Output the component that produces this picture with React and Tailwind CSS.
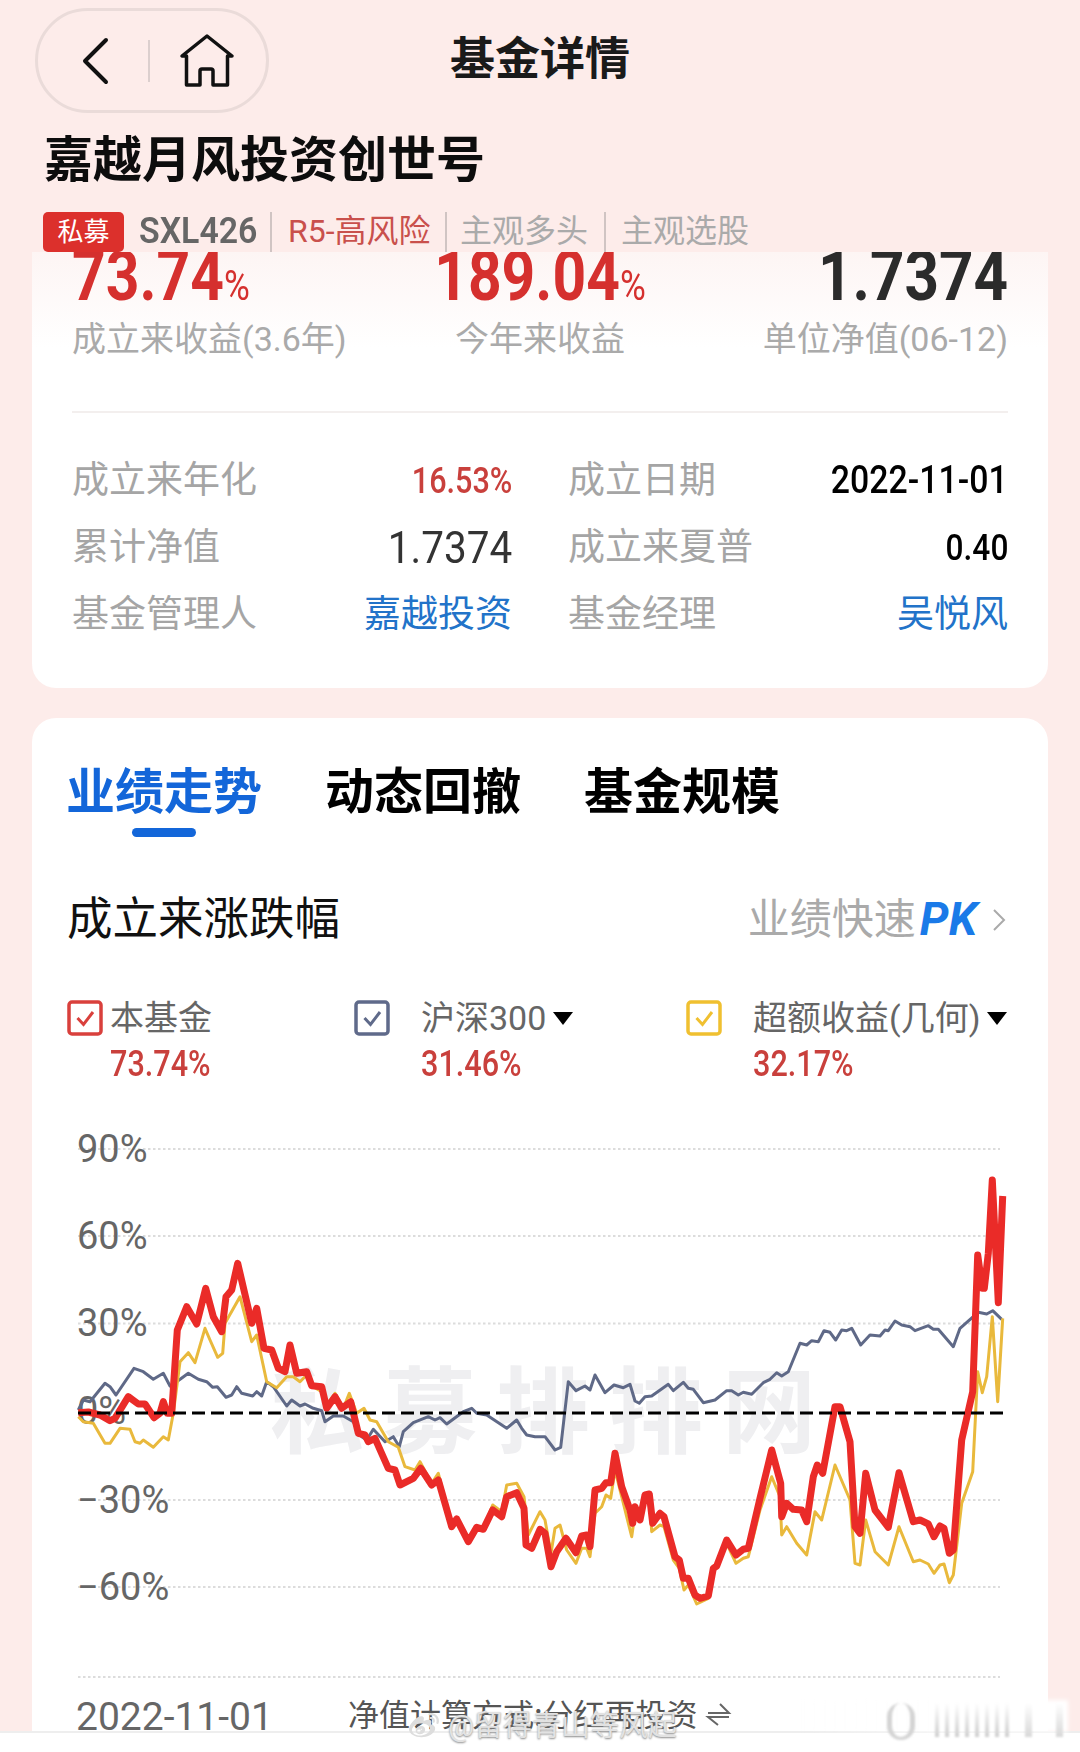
import React from 'react';
import { FaWeibo } from 'react-icons/fa';

// traced from the chart, in 3x crop coordinates: left crop starts at x=60, right crop at x=540
const redL = [[55,878],[85,876],[120,885],[150,902],[165,895],[205,830],[235,852],[255,852],[282,893],[300,880],[310,845],[322,880],[335,880],[352,630],[380,560],[410,612],[437,505],[460,590],[485,635],[498,530],[515,510],[533,430],[575,610],[590,565],[612,685],[635,690],[655,745],[675,755],[690,675],[710,760],[740,755],[755,797],[785,800],[800,865],[825,830],[845,865],[872,845],[895,940],[915,945],[925,965],[945,955],[985,1045],[1005,1050],[1020,1095],[1060,1075],[1082,1045],[1115,1095],[1135,1080],[1175,1220],[1190,1197],[1225,1265],[1250,1222],[1270,1228],[1298,1170],[1325,1190],[1340,1130],[1370,1118],[1392,1165],[1398,1275],[1415,1285],[1440,1228]];
const redR = [[15,1240],[33,1340],[50,1295],[78,1255],[108,1298],[125,1248],[140,1245],[150,1280],[165,1110],[185,1105],[198,1088],[212,1088],[225,1000],[245,1100],[270,1170],[278,1210],[285,1160],[300,1200],[315,1125],[328,1122],[338,1210],[360,1180],[372,1190],[405,1310],[418,1320],[430,1375],[445,1375],[465,1425],[480,1435],[505,1428],[520,1345],[530,1338],[560,1260],[588,1305],[610,1288],[625,1285],[660,1135],[695,990],[722,1090],[725,1190],[740,1150],[760,1168],[785,1170],[800,1205],[820,1070],[832,1035],[848,1060],[885,860],[900,860],[930,965],[945,1220],[960,1240],[977,1060],[1005,1170],[1045,1222],[1077,1058],[1120,1205],[1140,1200],[1165,1212],[1182,1250],[1200,1218],[1212,1225],[1228,1300],[1240,1290],[1265,960],[1298,815],[1313,405],[1327,505],[1333,505],[1345,400],[1357,180],[1375,548],[1388,228]];
const grayL = [[55,870],[70,840],[90,845],[135,790],[150,800],[168,825],[222,745],[250,755],[280,778],[310,760],[330,798],[350,785],[385,760],[415,778],[440,785],[458,802],[472,800],[498,832],[515,825],[530,800],[545,820],[578,828],[590,815],[605,828],[620,785],[640,800],[680,858],[695,840],[720,858],[735,852],[760,865],[785,872],[795,905],[820,888],[850,888],[880,905],[905,950],[920,960],[940,928],[975,965],[1000,950],[1018,980],[1030,935],[1060,908],[1105,890],[1125,900],[1140,893],[1160,912],[1210,875],[1235,865],[1250,880],[1280,885],[1340,925],[1370,900],[1385,925],[1400,945],[1425,950]];
const grayR = [[0,950],[15,950],[45,990],[62,982],[85,785],[108,812],[135,798],[150,810],[165,765],[195,818],[222,795],[250,803],[270,793],[285,843],[298,850],[315,830],[335,828],[385,793],[400,812],[430,787],[445,805],[460,808],[490,848],[525,840],[560,812],[575,812],[595,825],[610,817],[635,823],[670,788],[690,778],[710,758],[725,768],[745,755],[780,670],[800,675],[815,662],[835,665],[852,632],[870,637],[887,660],[905,630],[920,632],[935,625],[962,675],[990,645],[1020,648],[1035,630],[1045,632],[1065,603],[1085,615],[1110,620],[1125,632],[1165,617],[1180,628],[1195,628],[1240,680],[1260,625],[1300,590],[1315,577],[1340,582],[1358,572],[1385,598]];
const yellowL = [[55,890],[70,905],[100,910],[135,970],[150,970],[180,925],[210,928],[225,965],[240,970],[250,960],[280,982],[310,950],[325,960],[340,880],[360,725],[385,698],[405,728],[435,625],[450,660],[473,712],[488,700],[495,610],[540,530],[575,665],[590,645],[620,785],[650,803],[680,770],[700,770],[720,785],[740,765],[760,800],[785,815],[800,855],[825,820],[850,865],[868,820],[890,880],[912,865],[930,900],[950,905],[985,965],[1015,982],[1035,1040],[1065,1050],[1080,1025],[1115,1090],[1135,1060],[1175,1215],[1190,1200],[1225,1265],[1250,1220],[1270,1225],[1298,1155],[1325,1175],[1340,1095],[1370,1090],[1392,1130],[1405,1245],[1440,1175]];
const yellowR = [[15,1200],[33,1300],[45,1225],[60,1215],[80,1290],[108,1330],[125,1285],[140,1285],[150,1310],[165,1180],[185,1160],[198,1125],[212,1135],[225,1050],[245,1130],[275,1250],[285,1180],[300,1190],[315,1125],[328,1125],[335,1235],[360,1215],[372,1220],[400,1320],[418,1345],[432,1410],[445,1395],[470,1452],[505,1435],[520,1355],[560,1270],[588,1330],[610,1315],[625,1310],[660,1170],[695,1070],[720,1130],[725,1245],[740,1220],[770,1270],[800,1305],[825,1175],[845,1200],[885,1035],[930,1140],[945,1330],[960,1335],[977,1200],[1005,1295],[1045,1335],[1077,1220],[1120,1325],[1140,1320],[1165,1332],[1182,1360],[1200,1335],[1212,1332],[1228,1388],[1240,1365],[1265,1150],[1298,1055],[1313,755],[1327,818],[1340,770],[1357,590],[1373,845],[1388,595]];

const toPoints = (left, right) =>
  [...left.map(([x, y]) => [x / 3 + 60, y / 3 + 1120]), ...right.map(([x, y]) => [x / 3 + 540, y / 3 + 1120])]
    .map(([x, y]) => `${x.toFixed(1)},${y.toFixed(1)}`)
    .join(' ');

const Checkbox = ({ color }) => (
  <svg width="36" height="36" viewBox="0 0 36 36" fill="none" className="shrink-0">
    <rect x="2" y="2" width="32" height="32" rx="3" stroke={color} strokeWidth="3.5" />
    <path d="M10.5 18 L16.5 24.5 L26 12" stroke={color} strokeWidth="3" />
  </svg>
);

const Triangle = () => <div className="w-0 h-0 border-l-[10px] border-r-[10px] border-t-[13px] border-l-transparent border-r-transparent border-t-black" />;

const Chart = () => (
  <svg viewBox="32 1120 1016 612" className="block w-[1016px] h-[612px]">
    {[1149, 1236, 1323.5, 1500, 1587, 1677].map((y) => (
      <line key={y} x1="78" x2="1000" y1={y} y2={y} stroke="#dcdcdc" strokeWidth="2" strokeDasharray="2.5 2.5" />
    ))}
    <g fill="#666" fontSize="38" fontFamily="Roboto, sans-serif">
      <text x="77" y="1162">90%</text>
      <text x="77" y="1249">60%</text>
      <text x="77" y="1336">30%</text>
      <text x="77" y="1424">0%</text>
      <text x="77" y="1513">−30%</text>
      <text x="77" y="1600">−60%</text>
      <text x="76" y="1730" fontSize="39">2022-11-01</text>
    </g>
    <text x="270" y="1446" fill="#efeff1" fontSize="94" fontWeight="700" letterSpacing="19" fontFamily="'Noto Sans CJK SC', sans-serif">私募排排网</text>
    <polyline points={toPoints(grayL, grayR)} fill="none" stroke="#5f6987" strokeWidth="3" strokeLinejoin="round" />
    <polyline points={toPoints(yellowL, yellowR)} fill="none" stroke="#e9b93c" strokeWidth="3" strokeLinejoin="round" />
    <polyline points={toPoints(redL, redR)} fill="none" stroke="#ea2b28" strokeWidth="7" strokeLinejoin="round" />
    <line x1="78" x2="1004" y1="1413" y2="1413" stroke="#000" strokeWidth="3" strokeDasharray="13 6" />
    <text x="348" y="1726" fill="#555" fontSize="31" fontFamily="'Noto Sans CJK SC', sans-serif">净值计算方式:分红再投资</text>
    <path d="M708 1713 H729 L720 1704 M729 1717 H708 L718 1725" fill="none" stroke="#666" strokeWidth="2" />
  </svg>
);

// the app's digits are a narrow DIN face, so squeeze Roboto to the same width
const Num = ({ children, className }) => <span className={`inline-block ${className}`}>{children}</span>;

const App = () => {
  const rows = [
    ['成立来年化', '16.53%', 'text-[36px] font-medium text-[#c9403c] origin-right scale-x-[0.85]', '成立日期', '2022-11-01', 'text-[38px] font-medium text-black origin-right scale-x-[0.89]'],
    ['累计净值', '1.7374', 'text-[44px] text-[#333] origin-right scale-x-[0.92]', '成立来夏普', '0.40', 'text-[36px] font-medium text-black origin-right scale-x-[0.88]'],
    ['基金管理人', '嘉越投资', 'text-[37px] text-[#2273c9]', '基金经理', '吴悦风', 'text-[37px] text-[#2273c9]'],
  ];

  return (
    <div className="relative w-[1080px] h-[1752px] overflow-hidden bg-[#fdecea] font-['Roboto','Noto_Sans_CJK_SC',sans-serif]">
      {/* header */}
      <div className="relative h-[121px]">
        <div className="absolute left-[35px] top-[8px] w-[234px] h-[105px] rounded-full border-[3px] border-[#eadbd9] flex items-center">
          <svg width="28" height="48" viewBox="0 0 28 48" fill="none" className="ml-[44px]">
            <path d="M24 3 L3 24 L24 45" stroke="#111" strokeWidth="4" strokeLinecap="round" strokeLinejoin="round" />
          </svg>
          <div className="ml-[38px] w-[2px] h-[42px] bg-[#dccfce]" />
          <svg width="56" height="56" viewBox="0 0 56 56" fill="none" className="ml-[29px]">
            <path d="M28 3 L3 23 H7.5 V52 H21 V38 Q21 36 23 36 H32 Q34 36 34 38 V52 H48.5 V23 H53 Z" stroke="#111" strokeWidth="3.5" strokeLinejoin="round" />
          </svg>
        </div>
        <div className="pt-[31px] text-center text-[45px] leading-[58px] font-bold text-[#1a1a1a]">基金详情</div>
      </div>
      <h1 className="mt-[5px] pl-[44px] text-[49px] leading-[70px] font-bold text-[#0d0d0d]">嘉越月风投资创世号</h1>
      <div className="relative z-10 mt-[16px] pl-[43px] h-[40px] flex items-stretch">
        <span className="w-[81px] rounded-[5px] bg-[#dc302c] text-white text-[26px] flex items-center justify-center">私募</span>
        <span className="ml-[15px] w-[117px] text-[36px] leading-[38px] font-semibold text-[#666] origin-left scale-x-[0.94]">SXL426</span>
        <span className="ml-[14px] w-[2px] bg-[#d0c4c3]" />
        <span className="ml-[16px] w-[141px] text-[32px] leading-[38px] whitespace-nowrap text-[#c9504c]">R5-高风险</span>
        <span className="ml-[16px] w-[2px] bg-[#d0c4c3]" />
        <span className="ml-[13px] text-[32px] leading-[38px] whitespace-nowrap text-[#aaa]">主观多头</span>
        <span className="ml-[16px] w-[2px] bg-[#d0c4c3]" />
        <span className="ml-[15px] text-[32px] leading-[38px] whitespace-nowrap text-[#aaa]">主观选股</span>
      </div>

      {/* summary card */}
      <div className="mx-[32px] h-[436px] overflow-hidden rounded-b-[24px] bg-gradient-to-b from-[#fdf5f4] to-white to-[22%]">
        <div className="grid grid-cols-3 px-[40px] -mt-[12px]">
          <div>
            <Num className="text-[70px] leading-[72px] font-bold text-[#d5302e] whitespace-nowrap origin-left scale-x-[0.84]">73.74<span className="text-[42px] leading-none font-normal">%</span></Num>
            <div className="mt-[7px] text-[34px] leading-[40px] whitespace-nowrap text-[#aaa]">成立来收益(3.6年)</div>
          </div>
          <div className="text-center">
            <Num className="text-[70px] leading-[72px] font-bold text-[#d5302e] whitespace-nowrap origin-center scale-x-[0.84]">189.04<span className="text-[42px] leading-none font-normal">%</span></Num>
            <div className="mt-[7px] text-[34px] leading-[40px] text-[#aaa]">今年来收益</div>
          </div>
          <div className="text-right">
            <Num className="text-[70px] leading-[72px] font-bold text-[#2b2b2b] origin-right scale-x-[0.86]">1.7374</Num>
            <div className="mt-[7px] text-[34px] leading-[40px] whitespace-nowrap text-[#aaa]">单位净值(06-12)</div>
          </div>
        </div>
        <div className="mx-[40px] mt-[52px] h-[2px] bg-[#f3efee]" />
        <div className="mt-[34px] px-[40px] grid grid-cols-2 gap-x-[56px]">
          {rows.map((r) => (
            <React.Fragment key={r[0]}>
              <div className="h-[67px] flex items-center justify-between">
                <span className="text-[37px] text-[#a5a5a5]">{r[0]}</span>
                <Num className={r[2]}>{r[1]}</Num>
              </div>
              <div className="h-[67px] flex items-center justify-between">
                <span className="text-[37px] text-[#a5a5a5]">{r[3]}</span>
                <Num className={r[5]}>{r[4]}</Num>
              </div>
            </React.Fragment>
          ))}
        </div>
      </div>

      {/* performance card */}
      <div className="mx-[32px] mt-[30px] h-[1040px] rounded-t-[24px] bg-white">
        <div className="pt-[40px] pl-[34px] flex gap-[63px] text-[49px] leading-[70px] font-bold text-black">
          <div className="relative text-[#1366d9]">
            业绩走势
            <div className="absolute left-[66px] top-[70px] w-[64px] h-[9px] rounded-full bg-[#1366d9]" />
          </div>
          <div>动态回撤</div>
          <div>基金规模</div>
        </div>
        <div className="mt-[57px] pl-[35px] pr-[42px] flex items-center justify-between">
          <span className="text-[45.5px] leading-[60px] text-[#111]">成立来涨跌幅</span>
          <div className="flex items-center">
            <span className="text-[42px] text-[#aaa]">业绩快速</span>
            <span className="ml-[4px] text-[46px] font-bold italic text-[#1a7ae8]">PK</span>
            <svg width="14" height="24" viewBox="0 0 14 24" fill="none" className="ml-[15px]">
              <path d="M2 2 L12 12 L2 22" stroke="#aaa" strokeWidth="2" />
            </svg>
          </div>
        </div>
        <div className="mt-[46px] pl-[35px] flex">
          <div className="w-[287px] flex">
            <Checkbox color="#d9403c" />
            <div className="ml-[7px]">
              <div className="text-[34px] leading-[36px] text-[#666]">本基金</div>
              <Num className="mt-[8px] text-[36px] leading-[40px] font-medium text-[#c9403c] origin-left scale-x-[0.85]">73.74%</Num>
            </div>
          </div>
          <div className="w-[332px] flex">
            <Checkbox color="#5f6a8a" />
            <div className="ml-[31px]">
              <div className="flex items-center gap-[7px] text-[34px] leading-[36px] text-[#666]">沪深300<Triangle /></div>
              <Num className="mt-[8px] text-[36px] leading-[40px] font-medium text-[#c9403c] origin-left scale-x-[0.85]">31.46%</Num>
            </div>
          </div>
          <div className="flex">
            <Checkbox color="#f0c030" />
            <div className="ml-[31px]">
              <div className="flex items-center gap-[7px] text-[34px] leading-[36px] whitespace-nowrap text-[#666]">超额收益(几何)<Triangle /></div>
              <Num className="mt-[8px] text-[36px] leading-[40px] font-medium text-[#c9403c] origin-left scale-x-[0.85]">32.17%</Num>
            </div>
          </div>
        </div>
        <div className="mt-[36px]">
          <Chart />
        </div>
      </div>

      {/* bottom strip and repost watermark */}
      <div className="absolute left-0 right-0 bottom-0 h-[21px] bg-white border-t-2 border-[#eeeeee]" />
      <div className="absolute left-[403px] top-[1708px] flex items-center gap-[3px] text-[29px] leading-[36px] text-[#e2e2e2] [text-shadow:0_1px_2px_#888]">
        <FaWeibo className="w-[42px] h-[30px] text-[#dddddd]" />
        <span>@留得青山等风起</span>
      </div>
      <div className="absolute left-[800px] top-[1700px] w-[268px] h-[32px] bg-gradient-to-r from-white/0 via-white to-white blur-[2px]" />
      <div className="absolute left-[887px] top-[1703px] flex gap-[6px] blur-[1px]">
        <div className="w-[28px] h-[37px] rounded-full border-x-[5px] border-b-[3px] border-[#d4d4d4] mr-[14px]" />
        {[0, 1, 2, 3, 4, 5, 6, 7].map((i) => (
          <div key={i} className="w-[4px] h-[34px] bg-gradient-to-b from-white to-[#cfcfcf]" />
        ))}
        <div className="ml-[10px] w-[7px] h-[34px] bg-gradient-to-b from-white to-[#d8d8d8]" />
        <div className="ml-[18px] w-[7px] h-[34px] bg-gradient-to-b from-white to-[#d8d8d8]" />
      </div>
    </div>
  );
};

export default App;
